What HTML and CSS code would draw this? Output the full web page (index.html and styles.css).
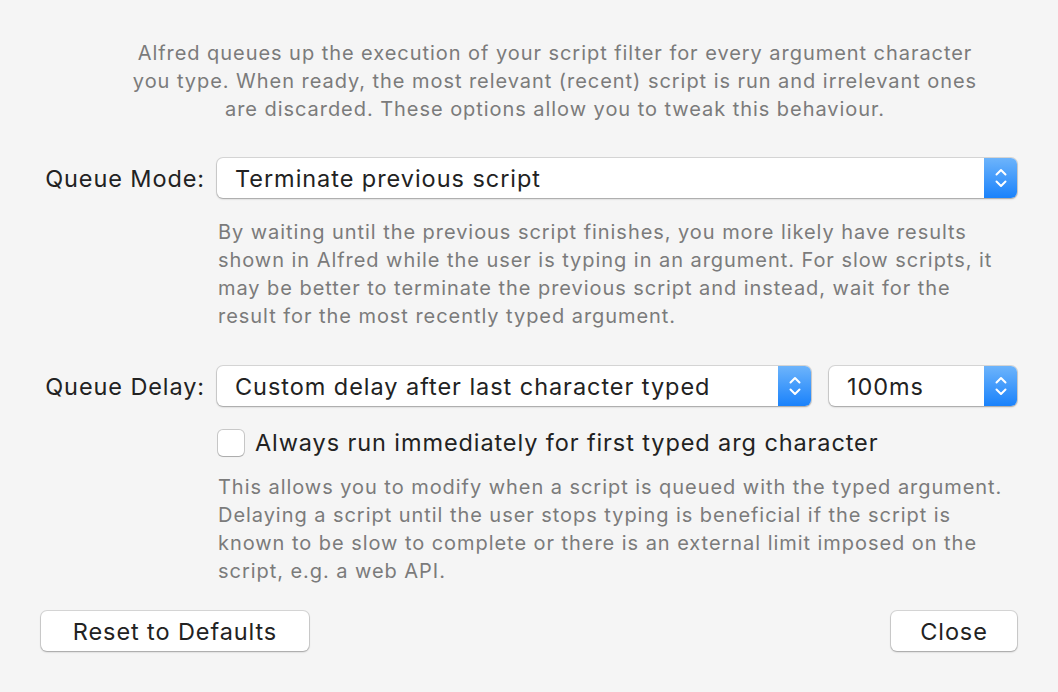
FILE: index.html
```html
<!DOCTYPE html>
<html>
<head>
    <link rel="stylesheet" href="styles.css">
</head>
<body>
    <div class="panel">
        <p class="intro">Alfred queues up the execution of your script filter for every argument character<br>you type. When ready, the most relevant (recent) script is run and irrelevant ones<br>are discarded. These options allow you to tweak this behaviour.</p>

        <div class="row mode-row">
            <label class="field-label">Queue Mode:</label>
            <div class="popup wide">
                <span class="popup-text">Terminate previous script</span>
                <span class="stepper">
                    <svg width="14" height="22" viewBox="0 0 14 22"><path d="M2.5 7.5 L7 3 L11.5 7.5 M2.5 14.5 L7 19 L11.5 14.5" fill="none" stroke="#fff" stroke-width="2" stroke-linecap="round" stroke-linejoin="round"/></svg>
                </span>
            </div>
        </div>
        <p class="help help-mode">By waiting until the previous script finishes, you more likely have results<br>shown in Alfred while the user is typing in an argument. For slow scripts, it<br>may be better to terminate the previous script and instead, wait for the<br>result for the most recently typed argument.</p>

        <div class="row delay-row">
            <label class="field-label">Queue Delay:</label>
            <div class="controls">
                <div class="popup grow">
                    <span class="popup-text">Custom delay after last character typed</span>
                    <span class="stepper">
                        <svg width="14" height="22" viewBox="0 0 14 22"><path d="M2.5 7.5 L7 3 L11.5 7.5 M2.5 14.5 L7 19 L11.5 14.5" fill="none" stroke="#fff" stroke-width="2" stroke-linecap="round" stroke-linejoin="round"/></svg>
                    </span>
                </div>
                <div class="popup small">
                    <span class="popup-text">100ms</span>
                    <span class="stepper">
                        <svg width="14" height="22" viewBox="0 0 14 22"><path d="M2.5 7.5 L7 3 L11.5 7.5 M2.5 14.5 L7 19 L11.5 14.5" fill="none" stroke="#fff" stroke-width="2" stroke-linecap="round" stroke-linejoin="round"/></svg>
                    </span>
                </div>
            </div>
        </div>

        <div class="check-row">
            <span class="checkbox"></span>
            <span class="check-text">Always run immediately for first typed arg character</span>
        </div>
        <p class="help help-delay">This allows you to modify when a script is queued with the typed argument.<br>Delaying a script until the user stops typing is beneficial if the script is<br>known to be slow to complete or there is an external limit imposed on the<br>script, e.g. a web API.</p>

        <div class="buttons">
            <button class="btn reset">Reset to Defaults</button>
            <button class="btn close">Close</button>
        </div>
    </div>
</body>
</html>
```

FILE: styles.css
```css
body {
    margin: 0;
    background: #f5f5f5;
    font-family: Inter, "Liberation Sans", sans-serif;
    color: #222;
}

.panel {
    width: 1058px;
    height: 692px;
    box-sizing: border-box;
    padding: 39px 41px 0 41px;
}

.intro {
    margin: 0 0 0 64px;
    width: 900px;
    text-align: center;
    font-size: 20px;
    letter-spacing: 0.95px;
    line-height: 28px;
    color: #7b7b7b;
    white-space: nowrap;
}

.row {
    display: flex;
    align-items: center;
}

.mode-row {
    margin-top: 35px;
}

.field-label {
    width: 164px;
    margin-right: 12px;
    text-align: right;
    font-size: 23.5px;
    letter-spacing: 0.9px;
    white-space: nowrap;
}

.popup {
    display: flex;
    align-items: center;
    height: 40px;
    background: #fff;
    border-radius: 6px;
    box-shadow: 0 0 0 1px rgba(0,0,0,0.12), 0 1px 2px rgba(0,0,0,0.25);
    overflow: hidden;
}

.wide {
    width: 800px;
}

.popup-text {
    flex: 1;
    padding-left: 18px;
    font-size: 23.5px;
    letter-spacing: 0.95px;
    white-space: nowrap;
}

.stepper {
    width: 33px;
    height: 40px;
    display: flex;
    align-items: center;
    justify-content: center;
    background: linear-gradient(#6db4fb, #1a82fb);
}

.help {
    margin: 0;
    margin-left: 177px;
    font-size: 20px;
    letter-spacing: 0.95px;
    line-height: 28px;
    color: #7b7b7b;
    white-space: nowrap;
}

.help-mode {
    margin-top: 20px;
}

.delay-row {
    margin-top: 36px;
}

.controls {
    width: 800px;
    display: flex;
    gap: 18px;
}

.grow {
    flex: 1;
}

.small {
    width: 188px;
}

.check-row {
    display: flex;
    align-items: center;
    margin-top: 22px;
    margin-left: 177px;
    height: 29px;
}

.checkbox {
    width: 26px;
    height: 26px;
    box-sizing: border-box;
    background: #fff;
    border-radius: 5px;
    box-shadow: 0 0 0 1px rgba(0,0,0,0.18), 0 1px 1px rgba(0,0,0,0.15);
    margin-right: 11px;
}

.check-text {
    font-size: 23.5px;
    letter-spacing: 0.9px;
}

.help-delay {
    margin-top: 16px;
}

.buttons {
    display: flex;
    justify-content: space-between;
    margin-top: 26px;
}

.btn {
    height: 40px;
    background: #fff;
    border: none;
    border-radius: 6px;
    box-shadow: 0 0 0 1px rgba(0,0,0,0.12), 0 1px 2px rgba(0,0,0,0.25);
    font-family: Inter, "Liberation Sans", sans-serif;
    font-size: 23.5px;
    letter-spacing: 0.9px;
    color: #222;
}

.reset {
    width: 268px;
}

.close {
    width: 126px;
}
```
